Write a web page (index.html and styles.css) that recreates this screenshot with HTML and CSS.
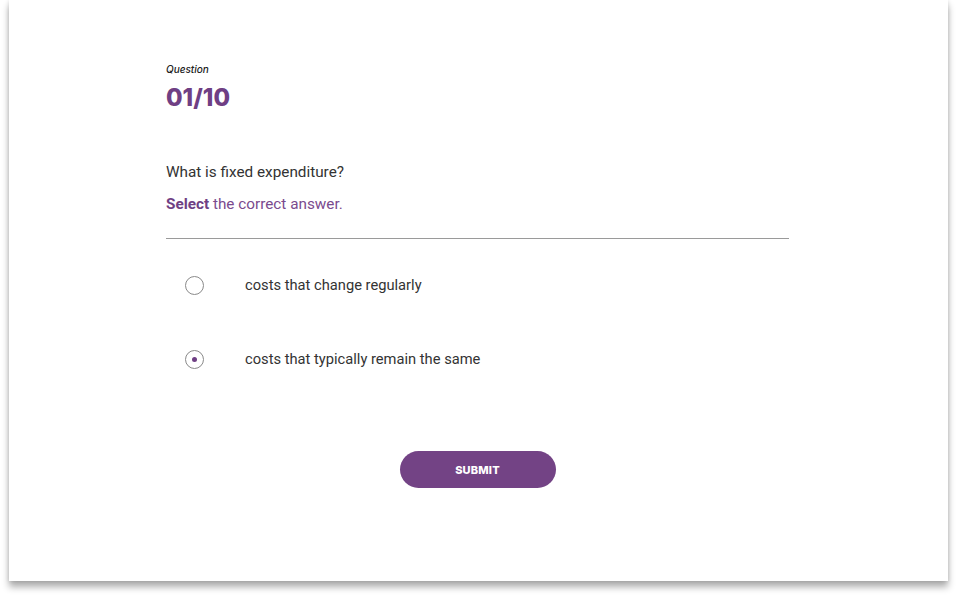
FILE: index.html
```
<!DOCTYPE html>
<html>
<head>
<meta charset="utf-8">
<title>Question 01/10</title>
<link rel="stylesheet" href="styles.css">
</head>
<body>
<div class="card">
  <div class="quiz">
    <div class="label">Question</div>
    <h1 class="count">01/10</h1>
    <p class="prompt">What is fixed expenditure?</p>
    <p class="hint"><b>Select</b> the correct answer.</p>
    <hr class="rule">
    <ul class="options">
      <li class="option"><span class="radio"></span><span class="text">costs that change regularly</span></li>
      <li class="option"><span class="radio checked"></span><span class="text">costs that typically remain the same</span></li>
    </ul>
    <div class="actions"><button class="submit">SUBMIT</button></div>
  </div>
</div>
</body>
</html>
```
FILE: styles.css
```
html, body {margin: 0; background: #fff;}
body {font-family: Roboto, "Liberation Sans", sans-serif; color: #333; padding-bottom: 18px;}
.card {margin-left: 9px; width: 939px; height: 581px; background: #fff;
  box-shadow: 0 6px 7px rgba(0,0,0,0.32), 0 0 4px rgba(0,0,0,0.12);}
.quiz {width: 623px; margin-left: 157px; padding-top: 63px;}
.label {font-size: 10px; font-style: italic; font-weight: 500; color: #222; line-height: 12px; font-family: Inter, sans-serif;}
.count {margin: 9px 0 0; font-family: Inter, sans-serif; font-weight: 800; font-size: 24px; line-height: 28px; color: #6f3f84;}
.prompt {margin: 50px 0 0; font-size: 15.3px; line-height: 20px; color: #333;}
.hint {margin: 12px 0 0; font-size: 15.3px; line-height: 20px; color: #7a4a8e;}
.hint b {font-weight: 700; color: #6f3f84;}
.rule {margin: 24px 0 0; border: 0; border-top: 1px solid #9a9a9a; height: 0;}
.options {list-style: none; margin: 0; padding: 0;}
.option {display: flex; align-items: center; height: 20px; margin-top: 36px;}
.option + .option {margin-top: 54px;}
.radio {box-sizing: border-box; width: 19px; height: 19px; border: 1.5px solid #8a8a8a; border-radius: 50%; margin-left: 19px; margin-right: 41px; display: flex; align-items: center; justify-content: center;}
.radio.checked::after {content: ""; width: 5px; height: 5px; border-radius: 50%; background: #6f3f84;}
.text {font-size: 14.7px; color: #333;}
.actions {display: flex; justify-content: center; margin-top: 82px;}
.submit {width: 156px; height: 37px; border: 0; border-radius: 19px; background: #734385; color: #fff; font-family: Inter, sans-serif; font-weight: 800; font-size: 11px; letter-spacing: 0.2px;}
```
